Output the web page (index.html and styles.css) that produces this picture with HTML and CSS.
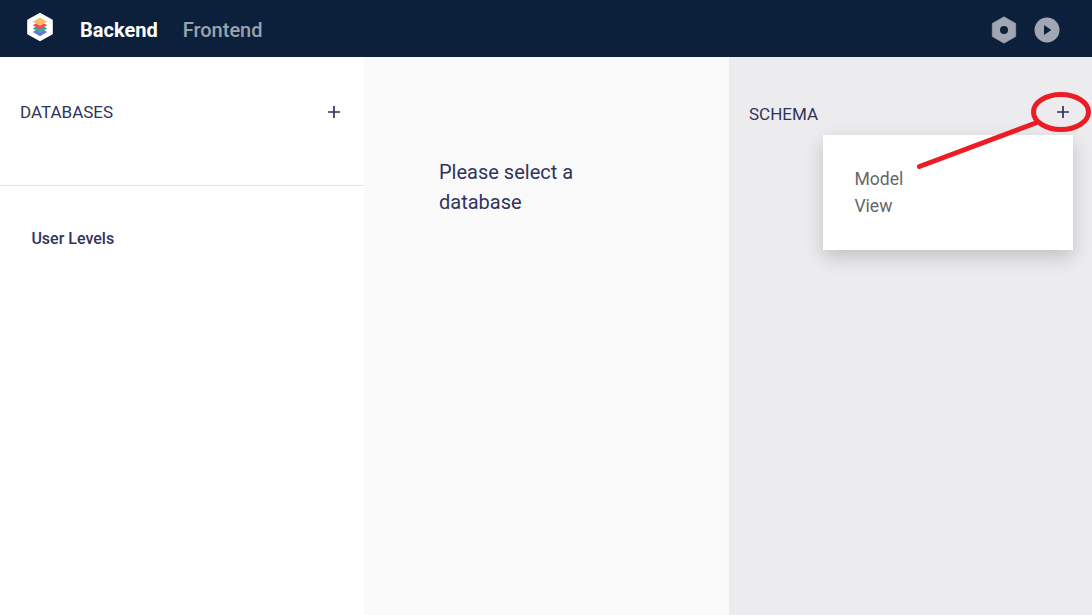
FILE: index.html
```html
<!DOCTYPE html>
<html lang="en">
<head>
<meta charset="utf-8">
<title>Backend</title>
<link rel="stylesheet" href="styles.css">
</head>
<body>
<header class="topbar">
  <svg class="logo" width="28" height="30" viewBox="0 0 28 30">
    <path d="M14 1.8 25.8 8.4V21.6L14 28.2 2.2 21.6V8.4Z" fill="#fff" stroke="#fff" stroke-width="2" stroke-linejoin="round"/>
    <path d="M14 15.6 21.2 19.9 14 24.2 6.8 19.9Z" fill="#6675d5"/>
    <path d="M14 12.3 21.2 16.6 14 20.9 6.8 16.6Z" fill="#35ad9b"/>
    <path d="M14 9 21.2 13.2 14 17.5 6.8 13.2Z" fill="#ee4961"/>
    <path d="M14 5.5 21.2 9.8 14 14 6.8 9.8Z" fill="#f4bf63"/>
  </svg>
  <nav class="nav">
    <a class="nav-item active">Backend</a>
    <a class="nav-item">Frontend</a>
  </nav>
  <div class="actions">
    <svg width="26" height="28" viewBox="0 0 26 28">
      <path fill="#a0a7b3" stroke="#a0a7b3" stroke-width=".6" stroke-linejoin="round" d="M13 .8 24.7 7.4V20.6L13 27.2 1.3 20.6V7.4Z"/>
      <circle cx="13" cy="14" r="4" fill="#0c203b"/>
    </svg>
    <svg width="26" height="28" viewBox="0 0 26 28">
      <circle cx="13" cy="14" r="12.5" fill="#a0a7b3"/>
      <path d="M10 9v10l7.3-5Z" fill="#0c203b"/>
    </svg>
  </div>
</header>
<main class="columns">
  <section class="databases">
    <div class="panel-head">
      <h2 class="title">DATABASES</h2>
      <svg class="plus" width="12" height="12" viewBox="0 0 12 12"><path d="M0 6H12M6 0V12"/></svg>
    </div>
    <div class="database">User Levels</div>
  </section>
  <section class="detail"><p class="message">Please select a database</p></section>
  <section class="schema">
    <div class="schema-head">
      <h2 class="title schema-title">SCHEMA</h2>
      <svg class="plus" width="12" height="12" viewBox="0 0 12 12"><path d="M0 6H12M6 0V12"/></svg>
    </div>
    <div class="menu">
      <div class="menu-item">Model</div>
      <div class="menu-item">View</div>
    </div>
  </section>
</main>
<svg class="annotation" width="1092" height="615" viewBox="0 0 1092 615">
  <ellipse cx="1061" cy="112" rx="27.5" ry="17.5"/>
  <path d="M919.5 166.5 1037 122.5"/>
</svg>
</body>
</html>
```

FILE: styles.css
```css
* { box-sizing: border-box; }
body {
  margin: 0;
  height: 615px;
  overflow: hidden;
  display: flex;
  flex-direction: column;
  font-family: Roboto, sans-serif;
  color: #30335c;
}
.topbar {
  height: 57px;
  flex: none;
  display: flex;
  align-items: center;
  padding: 0 32px 0 26px;
  background: #0c203b;
}
.logo { margin-bottom: 3px; }
.nav { display: flex; gap: 25px; margin: 3px 0 0 26px; }
.nav-item { font-size: 20px; line-height: 24px; font-weight: 500; color: #9aa2ae; }
.nav-item.active { color: #fff; font-weight: 700; }
.actions { display: flex; gap: 17px; margin: 3px 0 0 auto; }
.columns { flex: 1; display: grid; grid-template-columns: 364px 365px 363px; }
.databases { background: #fff; }
.panel-head {
  height: 129px;
  display: flex;
  justify-content: space-between;
  align-items: flex-start;
  padding: 45px 24px 0 20px;
  border-bottom: 1px solid #e2e2e4;
}
.title { margin: 0; font-size: 17px; line-height: 21px; font-weight: 400; }
.plus { margin-top: 4px; fill: none; stroke: #30335c; stroke-width: 1.7; }
.database { padding: 43px 31.4px; font-size: 16px; line-height: 20px; font-weight: 500; }
.detail { background: #fafafa; padding: 100px 75px; }
.message { margin: 0; width: 170px; font-size: 20px; line-height: 30px; }
.schema { background: #ececee; }
.schema-head {
  height: 78px;
  display: flex;
  justify-content: space-between;
  align-items: flex-start;
  padding: 45px 23px 0 20px;
}
.schema-title { margin-top: 2px; }
.menu {
  width: 250px;
  height: 115px;
  margin-left: 94px;
  padding: 31px 31.4px 0;
  background: #fff;
  color: #666;
  font-size: 17.6px;
  line-height: 27px;
  box-shadow: 0 7px 18px rgba(0, 0, 0, .18);
}
.annotation {
  position: absolute;
  top: 0;
  left: 0;
  pointer-events: none;
  fill: none;
  stroke: #ed1c24;
  stroke-width: 5;
  stroke-linecap: round;
}
```
